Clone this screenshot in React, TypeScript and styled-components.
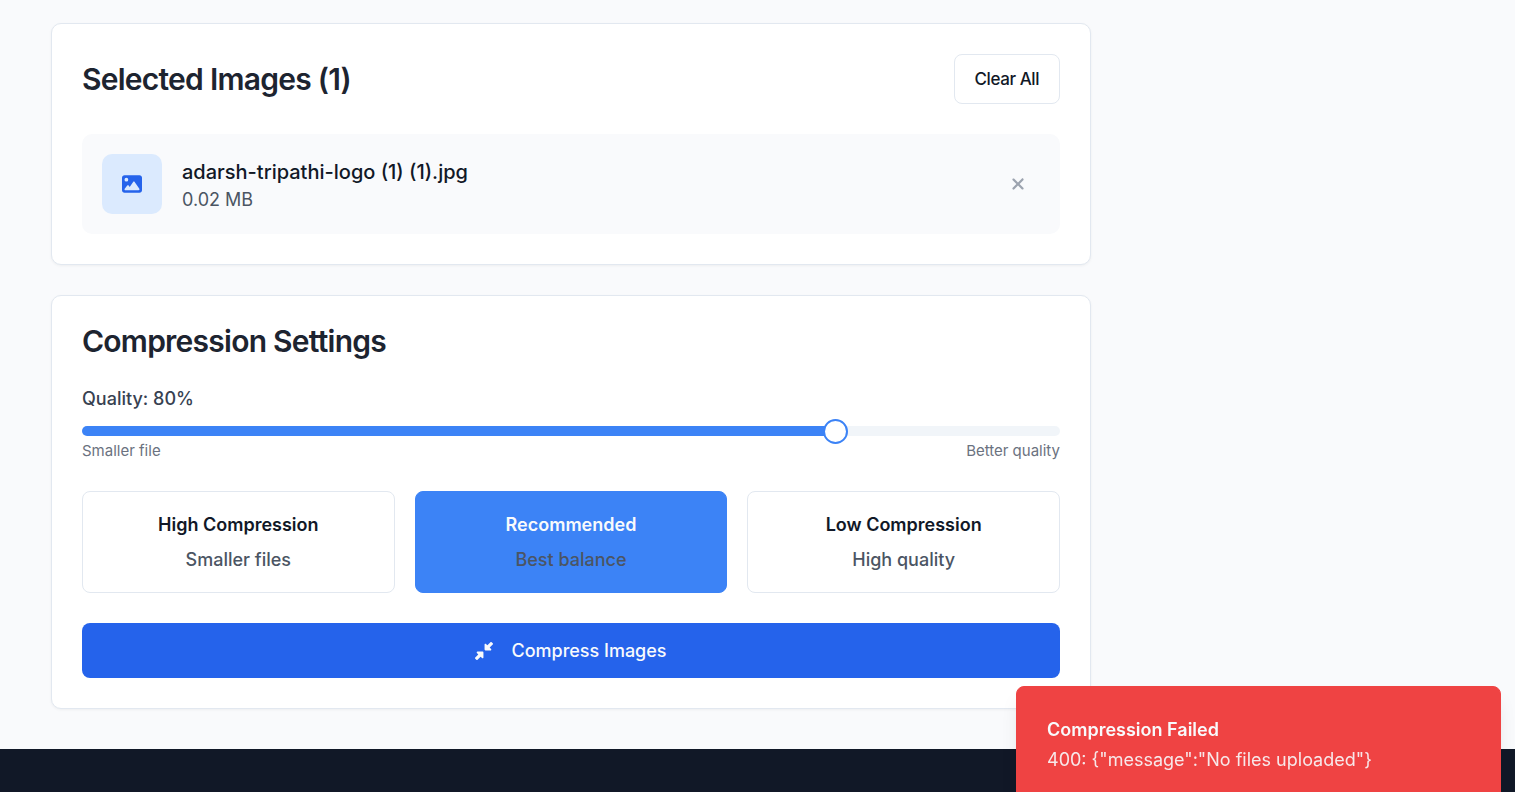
import React, { useState } from "react";
import styled, { createGlobalStyle } from "styled-components";
import { FaImage, FaXmark, FaDownLeftAndUpRightToCenter } from "react-icons/fa6";

const GlobalStyle = createGlobalStyle`
  *, *::before, *::after { box-sizing: border-box; }
  body {
    margin: 0;
    background: #f9fafc;
    color: #111827;
    font-family: Inter, "Liberation Sans", sans-serif;
    font-size: 18px;
    line-height: 25px;
  }
  h2, p { margin: 0; }
  button { font: inherit; cursor: pointer; }
`;

const Page = styled.div`
  min-height: 100vh;
  display: flex;
  flex-direction: column;
`;

const Main = styled.main`
  display: grid;
  grid-template-columns: minmax(0, 1fr) 333px;
  gap: 40px;
  padding: 23px 51px 40px;
`;

const Column = styled.div`
  display: flex;
  flex-direction: column;
  gap: 30px;
`;

const Card = styled.section`
  display: flex;
  flex-direction: column;
  gap: 30px;
  padding: 30px;
  background: #fff;
  border: 1px solid #e2e8f0;
  border-radius: 10px;
  box-shadow: 0 1px 3px rgba(0, 0, 0, 0.05);
`;

const CardHeader = styled.div`
  display: flex;
  align-items: center;
  justify-content: space-between;
`;

const Title = styled.h2`
  font-size: 30px;
  font-weight: 600;
  line-height: 30px;
  letter-spacing: -0.025em;
  color: #1d2430;
`;

const ClearButton = styled.button`
  height: 50px;
  padding: 0 20px;
  background: #fff;
  border: 1px solid #e2e8f0;
  border-radius: 8px;
  color: #111827;
  font-size: 17px;
  font-weight: 500;
  letter-spacing: -0.025em;
`;

const FileRow = styled.div`
  display: flex;
  align-items: center;
  gap: 20px;
  padding: 20px;
  background: #f9fafc;
  border-radius: 10px;
`;

const FileThumb = styled.div`
  display: flex;
  align-items: center;
  justify-content: center;
  width: 60px;
  height: 60px;
  background: #dbeafe;
  border-radius: 10px;
  color: #2563eb;
  font-size: 20px;
`;

const FileInfo = styled.div`
  flex: 1;
  min-width: 0;
`;

const FileName = styled.p`
  font-size: 20px;
  font-weight: 500;
  line-height: 30px;
`;

const FileSize = styled.p`
  color: #4b5563;
`;

const RemoveButton = styled.button`
  display: flex;
  align-items: center;
  justify-content: center;
  width: 45px;
  height: 45px;
  padding: 0;
  border: 0;
  background: transparent;
  color: #9ca3af;
  font-size: 18px;
`;

const QualityLabel = styled.label`
  display: block;
  margin-bottom: 15px;
  color: #374151;
  font-weight: 500;
`;

const QualitySlider = styled.input`
  display: block;
  width: 100%;
  height: 10px;
  margin: 0;
  appearance: none;
  background: linear-gradient(
    to right,
    #3c83f6 var(--filled),
    #f1f5f9 var(--filled)
  );
  border-radius: 5px;

  &::-webkit-slider-thumb {
    appearance: none;
    width: 25px;
    height: 25px;
    background: #fff;
    border: 2px solid #3c83f6;
    border-radius: 50%;
  }
`;

const SliderHints = styled.div`
  display: flex;
  justify-content: space-between;
  margin-top: 5px;
  color: #6b7280;
  font-size: 15px;
  line-height: 20px;
`;

const Presets = styled.div`
  display: grid;
  grid-template-columns: repeat(3, minmax(0, 1fr));
  gap: 20px;
`;

const Preset = styled.button<{ $active: boolean }>`
  display: flex;
  flex-direction: column;
  align-items: center;
  gap: 10px;
  padding: 20px;
  background: ${(p) => (p.$active ? "#3c83f6" : "#fff")};
  border: 1px solid ${(p) => (p.$active ? "#3c83f6" : "#e2e8f0")};
  border-radius: 8px;
  color: ${(p) => (p.$active ? "#f8fafc" : "#111827")};
`;

const PresetName = styled.span`
  font-weight: 600;
`;

const PresetNote = styled.span`
  color: #4b5563;
  font-weight: 500;
`;

const CompressButton = styled.button`
  display: flex;
  align-items: center;
  justify-content: center;
  gap: 18px;
  height: 55px;
  border: 0;
  border-radius: 8px;
  background: #2563eb;
  color: #f8fafc;
  font-weight: 500;
`;

const Footer = styled.footer`
  flex: 1;
  padding: 20px 0;
  background: #111827;
`;

const Toast = styled.div`
  position: fixed;
  right: 14px;
  bottom: -11px;
  display: flex;
  flex-direction: column;
  gap: 5px;
  width: 485px;
  padding: 30px;
  background: #ef4343;
  border: 1px solid #ef4343;
  border-radius: 8px;
  box-shadow: 0 12px 19px -4px rgba(0, 0, 0, 0.1),
    0 5px 8px -5px rgba(0, 0, 0, 0.1);
  color: #f8fafc;
`;

const ToastTitle = styled.p`
  font-weight: 600;
`;

const ToastText = styled.p`
  opacity: 0.9;
`;

const presets = [
  { name: "High Compression", note: "Smaller files", quality: 60 },
  { name: "Recommended", note: "Best balance", quality: 80 },
  { name: "Low Compression", note: "High quality", quality: 95 },
];

const MIN = 10;
const MAX = 100;

export default function App() {
  const [quality, setQuality] = useState(80);
  const filled = ((quality - MIN) / (MAX - MIN)) * 100;

  return (
    <>
      <GlobalStyle />
      <Page>
        <Main>
          <Column>
            <Card>
              <CardHeader>
                <Title>Selected Images (1)</Title>
                <ClearButton type="button">Clear All</ClearButton>
              </CardHeader>
              <FileRow>
                <FileThumb>
                  <FaImage aria-hidden />
                </FileThumb>
                <FileInfo>
                  <FileName>adarsh-tripathi-logo (1) (1).jpg</FileName>
                  <FileSize>0.02 MB</FileSize>
                </FileInfo>
                <RemoveButton type="button" aria-label="Remove image">
                  <FaXmark aria-hidden />
                </RemoveButton>
              </FileRow>
            </Card>

            <Card>
              <Title>Compression Settings</Title>
              <div>
                <QualityLabel htmlFor="quality">Quality: {quality}%</QualityLabel>
                <QualitySlider
                  id="quality"
                  type="range"
                  min={MIN}
                  max={MAX}
                  value={quality}
                  onChange={(e) => setQuality(Number(e.target.value))}
                  style={{ "--filled": `${filled}%` } as React.CSSProperties}
                />
                <SliderHints>
                  <span>Smaller file</span>
                  <span>Better quality</span>
                </SliderHints>
              </div>
              <Presets>
                {presets.map((p) => (
                  <Preset
                    key={p.name}
                    type="button"
                    $active={p.quality === quality}
                    onClick={() => setQuality(p.quality)}
                  >
                    <PresetName>{p.name}</PresetName>
                    <PresetNote>{p.note}</PresetNote>
                  </Preset>
                ))}
              </Presets>
              <CompressButton type="button">
                <FaDownLeftAndUpRightToCenter aria-hidden />
                Compress Images
              </CompressButton>
            </Card>
          </Column>
        </Main>
        <Footer />
      </Page>
      <Toast role="alert">
        <ToastTitle>Compression Failed</ToastTitle>
        <ToastText>400: {'{"message":"No files uploaded"}'}</ToastText>
      </Toast>
    </>
  );
}
